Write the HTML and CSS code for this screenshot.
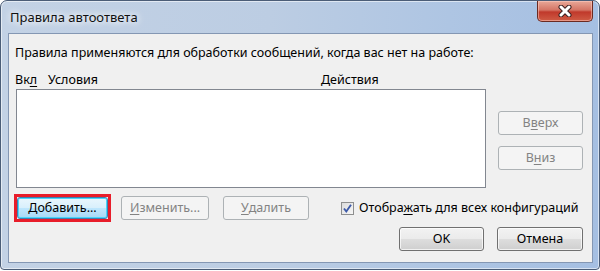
FILE: index.html
```html
<!DOCTYPE html>
<html>

<head lang="ru">
    <meta charset="UTF-8">
    <title>Правила автоответа</title>
    <link rel="stylesheet" href="styles.css">
</head>

<body>
    <div class="window">
        <!-- заголовок окна -->
        <div class="titlebar">
            <span class="title">Правила автоответа</span>
            <span class="close-btn">
                <svg width="18" height="12" viewBox="0 0 18 12">
                    <path d="M5 2 L13 10 M13 2 L5 10" stroke="#3b2020" stroke-width="5" stroke-linecap="round" />
                    <path d="M5 2 L13 10 M13 2 L5 10" stroke="#ffffff" stroke-width="3" stroke-linecap="round" />
                </svg>
            </span>
        </div>
        <!-- содержимое окна -->
        <div class="client">
            <div class="intro">Правила применяются для обработки сообщений, когда вас нет на работе:</div>
            <div class="list-header">
                <span class="col-on">Вк<u>л</u></span>
                <span class="col-cond">Условия</span>
                <span class="col-act">Действия</span>
            </div>
            <div class="list-row">
                <div class="rules-list"></div>
                <div class="side-buttons">
                    <span class="btn disabled side">В<u>в</u>ерх</span>
                    <span class="btn disabled side">В<u>н</u>из</span>
                </div>
            </div>
            <div class="action-row">
                <span class="focus-frame">
                    <span class="btn focused add">Добавить...</span>
                </span>
                <span class="btn disabled edit"><u>И</u>зменить...</span>
                <span class="btn disabled remove"><u>У</u>далить</span>
                <label class="check-line">
                    <span class="checkbox">
                        <svg width="11" height="11" viewBox="0 0 11 11">
                            <path d="M2 5.5 L4.3 8.5 L9 1.8" fill="none" stroke="#3d5aa8" stroke-width="1.9" />
                        </svg>
                    </span>
                    <span>Отобра<u>ж</u>ать для всех конфигураций</span>
                </label>
            </div>
            <div class="dialog-row">
                <span class="btn ok">OK</span>
                <span class="btn cancel">Отмена</span>
            </div>
        </div>
    </div>
</body>

</html>
```

FILE: styles.css
```css
/* сброс */
html,
body {
    margin: 0;
    padding: 0;
    background: #ffffff;
}

body {
    font-family: "Noto Sans", "Open Sans", sans-serif;
    font-size: 12.5px;
    color: #000000;
}

u {
    text-decoration: underline;
    text-underline-offset: 2px;
}

/* рамка окна в стиле Aero */
.window {
    width: 598px;
    height: 268px;
    border: 1px solid #4b5d77;
    border-radius: 7px 7px 4px 4px;
    background: linear-gradient(90deg, #c3d2e5 0%, #bccde3 45%, #aec5e3 75%, #a5bfe2 100%);
    display: flex;
    flex-direction: column;
    box-shadow: inset 0 0 0 1px rgba(255, 255, 255, .55);
}

.titlebar {
    height: 32px;
    display: flex;
    align-items: flex-start;
    justify-content: space-between;
}

.title {
    margin: 8px 0 0 9px;
    font-size: 13px;
    line-height: 17px;
    color: #111111;
    text-shadow: 0 0 6px #ffffff, 0 0 10px #ffffff;
}

/* кнопка закрытия */
.close-btn {
    width: 54px;
    height: 20px;
    margin-right: 6px;
    border: 1px solid #6b2a21;
    border-top: none;
    border-radius: 0 0 5px 5px;
    background: linear-gradient(180deg, #e8a898 0%, #d47565 45%, #c0392b 55%, #cf5c45 100%);
    box-shadow: inset 0 0 0 1px rgba(255, 210, 200, .5);
    display: flex;
    align-items: center;
    justify-content: center;
}

/* клиентская область */
.client {
    flex: 1;
    margin: 0 6px 6px 7px;
    border: 1px solid #8497b3;
    background: #f0f0f0;
    padding: 11px 9px 0 6px;
    line-height: 16px;
}

.list-header {
    margin-top: 11px;
    display: flex;
    height: 17px;
}

.col-on {
    width: 33px;
}

.col-cond {
    width: 273px;
}

.list-row {
    display: flex;
    align-items: flex-start;
}

.rules-list {
    width: 468px;
    height: 97px;
    margin-left: 1px;
    border: 1px solid #828790;
    background: #ffffff;
}

.side-buttons {
    margin: 22px 0 0 12px;
    display: flex;
    flex-direction: column;
    gap: 11px;
}

/* кнопки */
.btn {
    box-sizing: border-box;
    height: 24px;
    display: flex;
    align-items: center;
    justify-content: center;
    border: 1px solid #707070;
    border-radius: 3px;
    background: linear-gradient(180deg, #f2f2f2 0%, #ebebeb 48%, #dddddd 52%, #cfcfcf 100%);
    box-shadow: inset 0 0 0 1px rgba(255, 255, 255, .7);
}

.btn.disabled {
    border-color: #adb2b5;
    background: #f4f4f4;
    color: #838383;
    box-shadow: none;
}

.btn.focused {
    border-color: #3c7fb1;
    background: linear-gradient(180deg, #eaf6fd 0%, #d9f0fc 48%, #bee6fd 52%, #a7d9f5 100%);
    box-shadow: inset 0 0 0 1px #48d6fb;
}

/* красная рамка выделения вокруг кнопки */
.focus-frame {
    margin-left: -1px;
    border: 3px solid #e81d2a;
    display: flex;
}

.side {
    width: 85px;
}

.action-row {
    margin-top: 6px;
    display: flex;
    align-items: center;
}

.add {
    width: 91px;
    height: 22px;
}

.edit {
    width: 88px;
    margin-left: 10px;
}

.remove {
    width: 86px;
    margin-left: 14px;
}

.check-line {
    margin-left: 32px;
    display: flex;
    align-items: center;
    gap: 5px;
}

.checkbox {
    box-sizing: border-box;
    width: 13px;
    height: 13px;
    border: 1px solid #8e8f8f;
    background: linear-gradient(135deg, #dcdcdc 0%, #f7f7f7 100%);
    display: flex;
    align-items: center;
    justify-content: center;
}

.dialog-row {
    margin-top: 5px;
    display: flex;
    justify-content: flex-end;
    gap: 13px;
}

.ok {
    width: 85px;
}

.cancel {
    width: 86px;
}
```
